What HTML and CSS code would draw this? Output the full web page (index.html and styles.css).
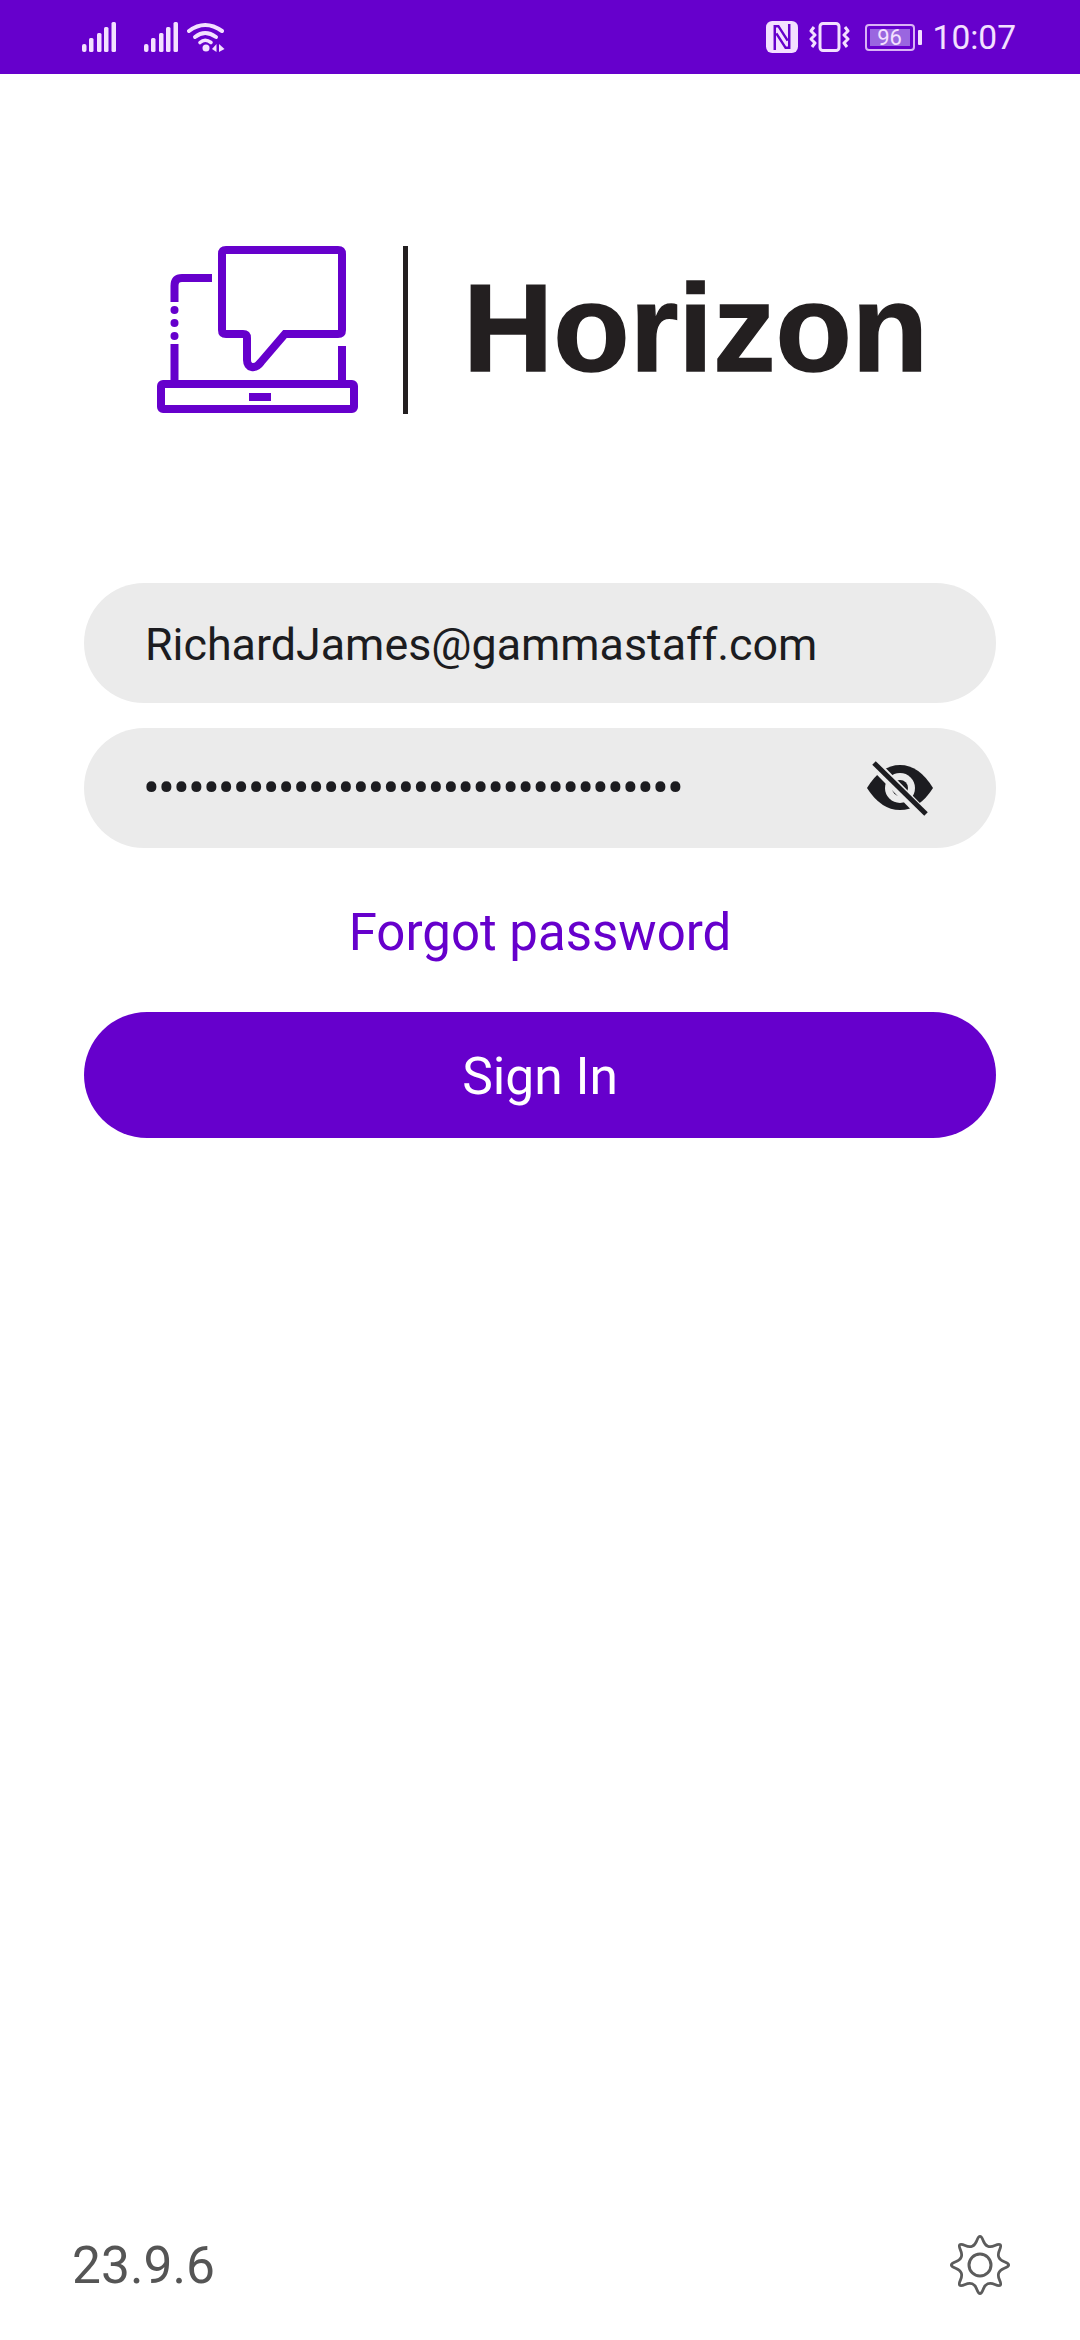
FILE: index.html
```html
<!DOCTYPE html>
<html lang="en">
<head>
    <meta charset="UTF-8">
    <meta name="viewport" content="width=device-width, initial-scale=1.0">
    <title>Horizon</title>
    <link rel="stylesheet" href="styles.css">
</head>
<body>

    <div class="status-bar">
        <div class="status-left">
            <svg class="signal" viewBox="0 0 34 30" width="34" height="30">
                <rect x="0" y="22" width="4.5" height="8" rx="2"/>
                <rect x="7" y="16" width="4.5" height="14" rx="1.5"/>
                <rect x="15" y="11" width="4.5" height="19" rx="1.5"/>
                <rect x="22" y="5" width="4.5" height="25" rx="1.5"/>
                <rect x="29.5" y="0" width="4.5" height="30" rx="1.5"/>
            </svg>
            <svg class="signal signal-second" viewBox="0 0 34 30" width="34" height="30">
                <rect x="0" y="22" width="4.5" height="8" rx="2"/>
                <rect x="7" y="16" width="4.5" height="14" rx="1.5"/>
                <rect x="15" y="11" width="4.5" height="19" rx="1.5"/>
                <rect x="22" y="5" width="4.5" height="25" rx="1.5"/>
                <rect x="29.5" y="0" width="4.5" height="30" rx="1.5"/>
            </svg>
            <svg class="wifi" viewBox="0 0 38 30" width="38" height="30">
                <path d="M2 9 Q18 -3 35 9" fill="none" stroke="#f3e0ff" stroke-width="4" stroke-linecap="round"/>
                <path d="M8 15 Q18 7 29 15" fill="none" stroke="#f3e0ff" stroke-width="4" stroke-linecap="round"/>
                <path d="M13 20.5 Q18 16 24 20.5" fill="none" stroke="#f3e0ff" stroke-width="3.6" stroke-linecap="round"/>
                <circle cx="19" cy="26" r="3.5"/>
                <path d="M29.5 22 V30 L25 27Z"/>
                <path d="M32 22 L37.5 27 L32 30Z"/>
            </svg>
        </div>
        <div class="status-right">
            <svg class="nfc" viewBox="0 0 31 31" width="32" height="32">
                <rect x="0" y="0" width="31" height="31" rx="6"/>
                <path d="M8.5 28 V5 H12 L21 19" fill="none" stroke="#6600cc" stroke-width="2.4"/>
                <path d="M22.5 3 V26 H19 L10 12" fill="none" stroke="#6600cc" stroke-width="2.4"/>
            </svg>
            <svg class="vibrate" viewBox="0 0 41 30" width="41" height="30">
                <rect x="11" y="1.5" width="19" height="27" rx="3" fill="none" stroke="#f3e0ff" stroke-width="3"/>
                <path d="M5 5 L2 9 L6 13 L2 17 L6 21 L3 25" fill="none" stroke="#f3e0ff" stroke-width="3" stroke-linejoin="round"/>
                <path d="M36 5 L39 9 L35 13 L39 17 L35 21 L38 25" fill="none" stroke="#f3e0ff" stroke-width="3" stroke-linejoin="round"/>
            </svg>
            <div class="battery">
                <div class="battery-body"><span class="battery-level">96</span></div>
                <div class="battery-nub"></div>
            </div>
            <span class="clock">10:07</span>
        </div>
    </div>

    <div class="page">
        <div class="logo">
            <svg class="logo-mark" viewBox="0 0 201 168" width="201" height="168">
                <g fill="none" stroke="#6600cc" stroke-width="8">
                    <rect x="4" y="138" width="193" height="25" rx="2"/>
                    <path d="M69 4 H181 Q185 4 185 8 V84 Q185 88 181 88 H128 L104 116 C98 124 90 122 90 114 V92 Q90 88 86 88 H69 Q65 88 65 84 V8 Q65 4 69 4Z"/>
                    <path d="M55 32 H25 Q17.5 32 17.5 40 V56"/>
                    <path d="M17.5 98 V136"/>
                    <path d="M185 100 V136"/>
                </g>
                <g fill="#6600cc">
                    <circle cx="17.5" cy="64" r="4"/>
                    <circle cx="17.5" cy="77" r="4"/>
                    <circle cx="17.5" cy="90" r="4"/>
                    <rect x="92" y="147" width="22" height="8"/>
                </g>
            </svg>
            <div class="logo-divider"></div>
            <span class="logo-name">Horizon</span>
        </div>

        <form class="login-form">
            <div class="field">
                <span class="field-text">RichardJames@gammastaff.com</span>
            </div>
            <div class="field">
                <span class="field-text field-password">••••••••••••••••••••••••••••••••••••</span>
                <svg class="eye" viewBox="0 0 70 56" width="70" height="56">
                    <path d="M2 28 Q16 5 35 5 Q54 5 68 28 Q54 50 35 50 Q16 50 2 28Z" fill="#1c1c20"/>
                    <circle cx="35" cy="28" r="15" fill="#ebebeb"/>
                    <circle cx="35" cy="28" r="8" fill="#1c1c20"/>
                    <path d="M7 2 L59 55" stroke="#ebebeb" stroke-width="11"/>
                    <path d="M9 3 L61 54" stroke="#1c1c20" stroke-width="5"/>
                </svg>
            </div>
            <a class="forgot-link">Forgot password</a>
            <button class="sign-in" type="button">Sign In</button>
        </form>

        <div class="footer">
            <span class="version">23.9.6</span>
            <svg class="settings" viewBox="-32 -32 64 64" width="64" height="64">
                <path d="M-3.25 -24.35 Q0 -33 3.25 -24.35 T14.9 -19.5 T19.5 -14.9 T24.35 -3.25 T24.35 3.25 T19.5 14.9 T14.9 19.5 T3.25 24.35 T-3.25 24.35 T-14.9 19.5 T-19.5 14.9 T-24.35 3.25 T-24.35 -3.25 T-19.5 -14.9 T-14.9 -19.5 T-3.25 -24.35Z" fill="none" stroke="#5c5c5c" stroke-width="2.8"/>
                <circle cx="0" cy="0" r="11" fill="none" stroke="#5c5c5c" stroke-width="3"/>
            </svg>
        </div>
    </div>

</body>
</html>
```

FILE: styles.css
```css
* {
    box-sizing: border-box;
}
body {
    margin: 0;
    height: 2340px;
    display: flex;
    flex-direction: column;
    background-color: #fff;
    font-family: Roboto, sans-serif;
}
.status-bar {
    height: 74px;
    flex-shrink: 0;
    display: flex;
    justify-content: space-between;
    align-items: center;
    padding: 0 64px 0 82px;
    background-color: #6600cc;
    color: #f3e0ff;
    fill: #f3e0ff;
}
.status-left,
.status-right {
    display: flex;
    align-items: center;
}
.signal-second {
    margin-left: 28px;
}
.wifi {
    margin-left: 9px;
}
.vibrate {
    margin-left: 11px;
}
.battery {
    display: flex;
    align-items: center;
    margin-left: 15px;
}
.battery-body {
    width: 50px;
    height: 27px;
    padding: 3px;
    border: 2px solid #d9b3f5;
    border-radius: 4px;
    display: flex;
}
.battery-level {
    flex: 1;
    display: flex;
    align-items: center;
    justify-content: center;
    background-color: #9a66e0;
    font-size: 22px;
    color: #f3e0ff;
}
.battery-nub {
    width: 4px;
    height: 15px;
    margin-left: 3px;
    background-color: #f3e0ff;
    border-radius: 1px;
}
.clock {
    margin-left: 11px;
    font-size: 33.5px;
}
.page {
    flex: 1;
    display: flex;
    flex-direction: column;
}
.logo {
    display: flex;
    align-items: center;
    height: 168px;
    margin-top: 172px;
    padding-left: 157px;
}
.logo-divider {
    width: 5px;
    height: 168px;
    margin-left: 45px;
    background-color: #231f20;
}
.logo-name {
    margin-left: 55px;
    padding-bottom: 5px;
    font-family: "Liberation Sans", Arial, sans-serif;
    font-size: 125px;
    font-weight: bold;
    -webkit-text-stroke: 1.5px #231f20;
    color: #231f20;
    line-height: 1;
}
.login-form {
    display: flex;
    flex-direction: column;
    margin-top: 169px;
    padding: 0 84px;
}
.field {
    height: 120px;
    margin-bottom: 25px;
    padding: 3px 61px 0;
    display: flex;
    align-items: center;
    justify-content: space-between;
    background-color: #ebebeb;
    border-radius: 60px;
    font-size: 44.8px;
    color: #1c1c20;
}
.field:nth-child(2) {
    margin-bottom: 0;
    padding: 0 61px;
}
.field-password {
    margin-left: -2px;
    font-size: 50px;
    letter-spacing: -1.9px;
}
.forgot-link {
    height: 164px;
    padding-top: 5px;
    display: flex;
    align-items: center;
    justify-content: center;
    font-size: 51px;
    color: #6600cc;
}
.sign-in {
    height: 126px;
    padding-top: 4px;
    border: none;
    border-radius: 63px;
    background-color: #6600cc;
    color: #fff;
    font-family: Roboto, sans-serif;
    font-size: 51.5px;
}
.footer {
    margin-top: auto;
    padding: 0 68px 43px 72px;
    display: flex;
    justify-content: space-between;
    align-items: center;
}
.version {
    font-size: 51.5px;
    color: #555;
}
```
